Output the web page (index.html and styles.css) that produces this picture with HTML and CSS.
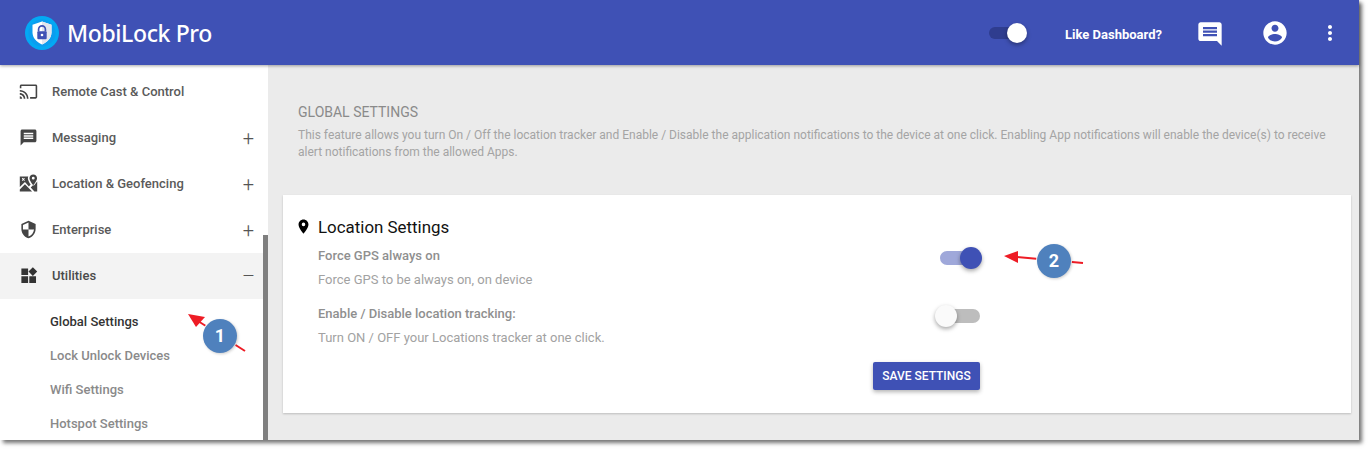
FILE: index.html
```html
<!DOCTYPE html>
<html lang="en">
<head>
<meta charset="utf-8">
<title>MobiLock Pro</title>
<link rel="stylesheet" href="styles.css">
</head>
<body>
<div class="window">
  <header class="topbar">
    <div class="brand">
      <svg class="logo" viewBox="0 0 34 34" aria-hidden="true">
        <circle cx="17" cy="17" r="17" fill="#03a9f4"/>
        <circle cx="17" cy="17" r="13.5" fill="#1e88e5" opacity=".35"/>
        <path d="M17 5.500l9.500 3.300v7.500c0 5.600-3.900 9.900-9.500 12.200-5.600-2.300-9.500-6.600-9.500-12.200V8.800z" fill="#fff"/>
        <path d="M17 5.500l9.500 3.300v7.500c0 5.600-3.900 9.900-9.500 12.200z" fill="#e3e6ee"/>
        <path d="M13.600 15.500v-2.300a3.400 3.400 0 0 1 6.800 0v2.300" fill="none" stroke="#3f51b5" stroke-width="1.700"/>
        <rect x="12.300" y="15.200" width="9.400" height="8" rx="1" fill="#3f51b5"/>
        <circle cx="17" cy="19" r="1.300" fill="#fff"/>
      </svg>
      <span class="brand-name">MobiLock Pro</span>
    </div>
    <div class="top-actions">
      <span class="switch switch-top"><span class="track"></span><span class="thumb"></span></span>
      <span class="like">Like Dashboard?</span>
      <svg class="top-icon msg" viewBox="0 0 24 24" aria-hidden="true"><path fill="#fff" d="M22 4c0-1.100-.9-2-2-2H4c-1.100 0-2 .9-2 2v12c0 1.100.9 2 2 2h14l4 4zM18 14H6v-2h12zm0-3H6V9h12zm0-3H6V6h12z"/></svg>
      <svg class="top-icon" viewBox="0 0 24 24" aria-hidden="true"><path fill="#fff" d="M12 2C6.480 2 2 6.480 2 12s4.480 10 10 10 10-4.480 10-10S17.520 2 12 2zm0 3c1.660 0 3 1.340 3 3s-1.340 3-3 3-3-1.340-3-3 1.340-3 3-3zm0 14.200c-2.500 0-4.710-1.280-6-3.220.03-1.990 4-3.080 6-3.080s5.970 1.090 6 3.080c-1.290 1.940-3.500 3.220-6 3.220z"/></svg>
      <svg class="top-icon more" viewBox="0 0 24 24" aria-hidden="true"><path fill="#fff" d="M12 8c1.100 0 2-.9 2-2s-.9-2-2-2-2 .9-2 2 .9 2 2 2zm0 2c-1.100 0-2 .9-2 2s.9 2 2 2 2-.9 2-2-.9-2-2-2zm0 6c-1.100 0-2 .9-2 2s.9 2 2 2 2-.9 2-2-.9-2-2-2z"/></svg>
    </div>
  </header>
  <div class="body">
    <nav class="sidebar">
      <div class="nav-row">
        <svg class="nav-icon" viewBox="0 0 24 24" aria-hidden="true"><path d="M21 3H3c-1.100 0-2 .9-2 2v3h2V5h18v14h-7v2h7c1.100 0 2-.9 2-2V5c0-1.100-.9-2-2-2zM1 18v3h3c0-1.660-1.340-3-3-3zm0-4v2c2.760 0 5 2.240 5 5h2c0-3.870-3.130-7-7-7zm0-4v2c4.970 0 9 4.030 9 9h2c0-6.080-4.930-11-11-11z"/></svg>
        <span class="nav-label">Remote Cast &amp; Control</span>
      </div>
      <div class="nav-row">
        <svg class="nav-icon" viewBox="0 0 24 24" aria-hidden="true"><path d="M20 2H4c-1.100 0-2 .9-2 2v18l4-4h14c1.100 0 2-.9 2-2V4c0-1.100-.9-2-2-2zm-2 12H6v-2h12zm0-3H6V9h12zm0-3H6V6h12z"/></svg>
        <span class="nav-label">Messaging</span>
        <span class="nav-sign">+</span>
      </div>
      <div class="nav-row">
        <svg class="nav-icon" viewBox="0 0 24 24" aria-hidden="true"><path d="M18 0.500C15.300 0.500 13.200 2.600 13.200 5.300c0 3.300 4.800 8.700 4.800 8.700s4.800-5.400 4.800-8.700C22.800 2.600 20.700 0.500 18 0.500zm0 6.600a1.800 1.800 0 1 1 0-3.600 1.800 1.800 0 0 1 0 3.600z" /><path d="M1 3h10.700c-.3.700-.5 1.500-.5 2.300 0 2.600 2 5.900 3.500 8l-2.200 2.400L7.500 10 1 16.500zm3.700 1.600L3.600 5.700l1.100 1.100-1.100 1.100.8.800 1.100-1.100 1.100 1.100.8-.8-1.100-1.100 1.100-1.100-.8-.8-1.100 1.100zM1 19.500l6.500-6.700 9 9.200H1zM23 9.500V22h-3.500l-4.700-4.800 3.200-3.200.7.800z"/></svg>
        <span class="nav-label">Location &amp; Geofencing</span>
        <span class="nav-sign">+</span>
      </div>
      <div class="nav-row">
        <svg class="nav-icon" viewBox="0 0 24 24" aria-hidden="true"><path d="M12 1L3 5v6c0 5.550 3.840 10.740 9 12 5.160-1.260 9-6.450 9-12V5zm0 10.990h7c-.53 4.120-3.280 7.790-7 8.940V12H5V6.300l7-3.110z"/></svg>
        <span class="nav-label">Enterprise</span>
        <span class="nav-sign">+</span>
      </div>
      <div class="nav-row nav-open">
        <svg class="nav-icon dark" viewBox="0 0 24 24" aria-hidden="true"><path d="M3 3h8.500v8.500H3zM3 13h8.500v8.500H3zM13 13h8.500v8.500H13zM17.500 1.500L23 7l-5.500 5.500L12 7z"/></svg>
        <span class="nav-label">Utilities</span>
        <span class="nav-sign">–</span>
      </div>
      <ul class="subnav">
        <li class="active">Global Settings</li>
        <li>Lock Unlock Devices</li>
        <li>Wifi Settings</li>
        <li>Hotspot Settings</li>
      </ul>
      <span class="scrollbar"></span>
    </nav>
    <main class="content">
      <section class="intro">
        <h1>GLOBAL SETTINGS</h1>
        <p>This feature allows you turn On / Off the location tracker and Enable / Disable the application notifications to the device at one click. Enabling App notifications will enable the device(s) to receive alert notifications from the allowed Apps.</p>
      </section>
      <section class="card">
        <h2>
          <svg class="pin" viewBox="0 0 24 24" aria-hidden="true"><path d="M12 2C8.130 2 5 5.130 5 9c0 5.250 7 13 7 13s7-7.750 7-13c0-3.870-3.130-7-7-7zm0 9.500a2.500 2.500 0 0 1 0-5 2.500 2.500 0 0 1 0 5z"/></svg>
          Location Settings
        </h2>
        <div class="setting">
          <div class="setting-text">
            <h3>Force GPS always on</h3>
            <p>Force GPS to be always on, on device</p>
          </div>
          <span class="switch switch-on"><span class="track"></span><span class="thumb"></span></span>
        </div>
        <div class="setting">
          <div class="setting-text">
            <h3>Enable / Disable location tracking:</h3>
            <p>Turn ON / OFF your Locations tracker at one click.</p>
          </div>
          <span class="switch switch-off"><span class="track"></span><span class="thumb"></span></span>
        </div>
        <div class="actions"><button class="save" type="button">SAVE SETTINGS</button></div>
      </section>
    </main>
  </div>
  <svg class="annotation arrow-one" viewBox="0 0 70 50" aria-hidden="true">
    <path d="M59 40L12 10" stroke="#ee1c25" stroke-width="2" fill="none"/>
    <path d="M2 3L19 6 10 16z" fill="#ee1c25"/>
  </svg>
  <span class="badge badge-one">1</span>
  <svg class="annotation arrow-two" viewBox="0 0 90 20" aria-hidden="true">
    <path d="M80 11L14 5" stroke="#ee1c25" stroke-width="2" fill="none"/>
    <path d="M1 4L15 -1 15 11z" fill="#ee1c25"/>
  </svg>
  <span class="badge badge-two">2</span>
</div>
</body>
</html>
```
FILE: styles.css
```css
* { box-sizing: border-box; }
html, body { margin: 0; padding: 0; background: #fff; overflow: hidden; }
body { height: 449px; font-family: Roboto, "Liberation Sans", sans-serif; }

.window {
  position: relative;
  width: 1359px;
  height: 440px;
  display: flex;
  flex-direction: column;
  background: #ebebeb;
  box-shadow: 3px 3px 4px rgba(0,0,0,.55);
}

.topbar {
  position: relative;
  z-index: 2;
  flex: 0 0 65px;
  display: flex;
  align-items: center;
  justify-content: space-between;
  background: #3f51b5;
  box-shadow: 0 1px 3px rgba(0,0,0,.35);
  padding-left: 25px;
}
.brand { display: flex; align-items: center; gap: 8px; }
.logo { width: 34px; height: 34px; display: block; }
.brand-name { color: #fff; font: 500 23px/34px "Noto Sans", "Open Sans", sans-serif; letter-spacing: -.38px; }

.top-actions { display: flex; align-items: center; padding-right: 17px; }
.like { color: #fff; font-size: 13px; font-weight: 700; margin: 4px 34px 0 36px; white-space: nowrap; }
.top-icon { width: 28px; height: 28px; display: block; margin-right: 29px; }
.top-icon.msg { margin-right: 37px; margin-top: 2px; }
.top-icon.more { width: 24px; height: 24px; margin-right: 0; }

.switch { position: relative; display: block; width: 40px; height: 20px; }
.track { position: absolute; left: 0; top: 3px; width: 36px; height: 14px; border-radius: 7px; }
.thumb { position: absolute; top: -1px; width: 22px; height: 22px; border-radius: 50%; box-shadow: 0 2px 4px rgba(0,0,0,.35); }
.switch-top { width: 40px; }
.switch-top .track { left: 0; top: 4px; width: 32px; height: 12px; background: #2f3d8f; border-radius: 6px; }
.switch-top .thumb { left: 18px; top: 0; width: 20px; height: 20px; background: #fff; }
.switch-on .track { left: 0; background: #9fa8da; }
.switch-on .thumb { left: 20px; background: #3f51b5; }
.switch-off .track { left: 4px; background: #bdbdbd; }
.switch-off .thumb { left: -5px; background: #fafafa; }

.body { flex: 1; display: flex; min-height: 0; }

.sidebar {
  position: relative;
  flex: 0 0 268px;
  height: 375px;
  padding-top: 4px;
  overflow: hidden;
  background: #fff;
}
.nav-row {
  display: flex;
  align-items: center;
  height: 46px;
  padding: 0 14px 2px 19px;
  color: #5a5a5a;
}
.nav-open { background: #f3f3f3; color: #4a4a4a; }
.nav-icon { width: 19px; height: 19px; flex: none; fill: #444; margin-right: 14px; }
.nav-icon.dark { fill: #333; }
.nav-label { flex: 1; font-size: 13px; font-weight: 500; white-space: nowrap; }
.nav-sign { width: 11px; height: 11px; flex: none; margin-top: 3px; font-size: 20px; font-weight: 300; line-height: 11px; text-align: center; color: #555; display: flex; justify-content: center; }

.subnav { list-style: none; margin: 6px 0 0; padding: 0 0 0 50px; }
.subnav li { height: 34px; line-height: 34px; font-size: 13px; font-weight: 500; color: #8a8a8a; white-space: nowrap; }
.subnav li.active { color: #333; }
.scrollbar { position: absolute; right: 0; top: 170px; bottom: 0; width: 5px; background: #7f7f7f; }

.content { flex: 1; min-width: 0; padding: 0 8px 0 15px; }
.intro { height: 130px; padding: 38px 15px 0; color: #a8a8a8; }
.intro h1 { margin: 0 0 6px; font-size: 14px; line-height: 18px; font-weight: 400; color: #8a8a8a; }
.intro p { margin: 0; font-size: 12px; line-height: 17px; color: #a4a4a4; }

.card {
  position: relative;
  height: 218px;
  background: #fff;
  box-shadow: 0 1px 2px rgba(0,0,0,.2);
  padding: 22px 15px 0;
}
.card h2 { display: flex; align-items: center; margin: 0; height: 20px; font-size: 16.900px; font-weight: 400; color: #111; }
.pin { width: 17px; height: 17px; fill: #000; margin: -1px 6.500px 0 -3.500px; flex: none; }
.setting { display: flex; justify-content: flex-start; align-items: flex-start; height: 58px; padding-left: 20px; }
.setting-text { width: 622px; }
.setting-text h3 { margin: 0; padding-top: 9px; font-size: 13px; line-height: 20px; font-weight: 500; color: #8f8f8f; }
.setting-text p { margin: 4px 0 0; font-size: 13px; line-height: 20px; color: #a2a2a2; }
.setting .switch { margin-top: 11px; }
.actions { padding-left: 575px; margin-top: 9px; }
.save {
  display: block;
  width: 107px;
  height: 28px;
  padding: 0;
  border: 0;
  border-radius: 2px;
  background: #3f51b5;
  color: #fff;
  font: 500 12px/28px Roboto, sans-serif;
  box-shadow: 0 2px 4px rgba(0,0,0,.3);
}

.annotation { position: absolute; z-index: 3; overflow: visible; }
.arrow-one { left: 186px; top: 311px; width: 70px; height: 50px; }
.arrow-two { left: 1003px; top: 252px; width: 90px; height: 20px; }
.badge {
  position: absolute;
  z-index: 4;
  width: 34px;
  height: 34px;
  border-radius: 50%;
  background: #4f81bd;
  color: #fff;
  font-size: 18px;
  font-weight: 700;
  line-height: 34px;
  text-align: center;
  box-shadow: 1px 1px 3px rgba(0,0,0,.2), 0 0 0 1px #fff;
}
.badge-one { left: 203px; top: 319px; }
.badge-two { left: 1037px; top: 244px; }
```
